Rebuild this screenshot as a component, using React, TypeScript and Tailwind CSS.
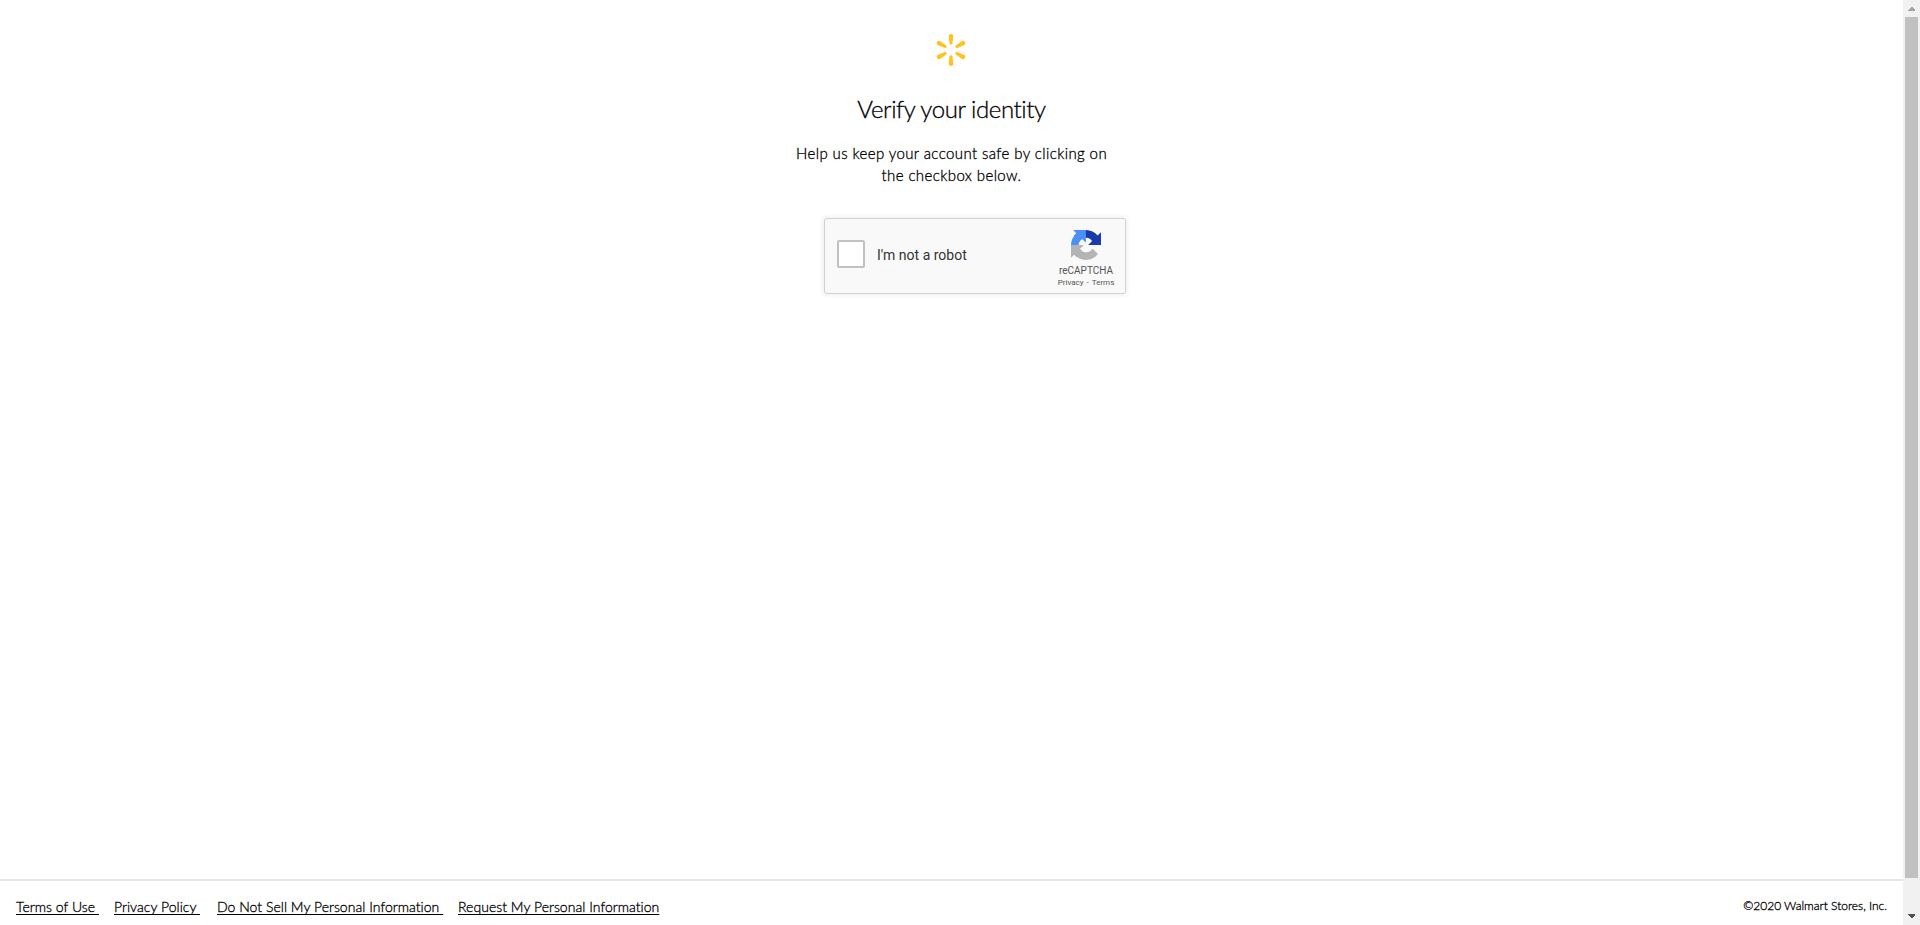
import React from 'react';

const rays = [0, 60, 120, 180, 240, 300];

function Spark() {
  return (
    <svg className="mr-px h-8 w-8" viewBox="-16 -16 32 32" fill="#ffc220" aria-hidden="true">
      {rays.map((a) => (
        <path
          key={a}
          transform={`rotate(${a})`}
          d="M0-16c-1.4 0-2.400.8-2.300 1.900l.8 7.700c.1.7.8 1.100 1.500 1.100s1.400-.4 1.500-1.100l.8-7.700C2.400-15.200 1.400-16 0-16z"
        />
      ))}
    </svg>
  );
}

function CaptchaLogo() {
  return (
    <svg className="h-[30px] w-[30px]" viewBox="0 0 64 64" aria-hidden="true">
      <path fill="#1c3aa9" d="M64 31.955l-.033-1.37V4.687l-7.16 7.16C50.948 4.674 42.033.093 32.05.093c-10.4 0-19.622 4.96-25.458 12.64l11.736 11.86a15.55 15.55 0 0 1 4.754-5.334c2.05-1.6 4.952-2.906 8.968-2.906.485 0 .86.057 1.135.163 4.976.393 9.288 3.14 11.828 7.124l-8.307 8.307L64 31.953" />
      <path fill="#4a90f6" d="M31.862.094l-1.37.033H4.594l7.16 7.16C4.58 13.147 0 22.06 0 32.046c0 10.4 4.96 19.622 12.64 25.458L24.5 45.768a15.55 15.55 0 0 1-5.334-4.754c-1.6-2.05-2.906-4.952-2.906-8.968 0-.485.057-.86.163-1.135.393-4.976 3.14-9.288 7.124-11.828l8.307 8.307L31.86.095" />
      <path fill="#b4b4b4" d="M.001 32.045l.033 1.37v25.898l7.16-7.16c5.86 7.173 14.774 11.754 24.76 11.754 10.4 0 19.622-4.96 25.458-12.64l-11.736-11.86a15.55 15.55 0 0 1-4.754 5.334c-2.05 1.6-4.952 2.906-8.968 2.906-.485 0-.86-.057-1.135-.163-4.976-.393-9.288-3.14-11.828-7.124l8.307-8.307c-10.522.04-22.4.066-27.295-.005" />
    </svg>
  );
}

function Captcha() {
  return (
    <div className="ml-[47px] flex h-[76px] w-[302px] rounded-[3px] border border-[#d3d3d3] bg-[#f9f9f9] pl-3 font-[Roboto,sans-serif] shadow-[0_0_4px_1px_rgba(0,0,0,0.08)]">
      <button aria-label="I'm not a robot" className="mt-[21px] h-7 w-7 rounded-[2px] border-2 border-[#c1c1c1] bg-white" />
      <span className="mt-[28px] ml-3 w-[170px] text-[14px] leading-[17px] whitespace-nowrap text-[#333]">I'm not a robot</span>
      <div className="flex w-[78px] flex-col items-center pt-[11px] text-[#555]">
        <CaptchaLogo />
        <span className="mt-[5px] text-[10px] leading-[12px]">reCAPTCHA</span>
        <span className="mt-px flex gap-[3px] text-[8px] leading-[10px]">
          <a href="#privacy">Privacy</a>
          <span>-</span>
          <a href="#terms">Terms</a>
        </span>
      </div>
    </div>
  );
}

const links = [
  { label: 'Terms of Use\u00a0', width: 'w-[82px]' },
  { label: 'Privacy Policy\u00a0', width: 'w-[87px]' },
  { label: 'Do Not Sell My Personal Information\u00a0', width: 'w-[225px]' },
  { label: 'Request My Personal Information', width: 'w-[201px]' },
];

function Footer() {
  return (
    <footer className="flex h-[46px] justify-between border-t-2 border-[#e6e6e6] px-4 pt-[17px] text-black">
      <nav className="flex gap-4 text-[14px] leading-[18px] tracking-[0.03px]">
        {links.map((l) => (
          <a key={l.label} href="#legal" className={`${l.width} whitespace-nowrap underline underline-offset-2`}>{l.label}</a>
        ))}
      </nav>
      <span className="text-[12px] leading-4 tracking-[-0.02px]">©2020 Walmart Stores, Inc.</span>
    </footer>
  );
}

function Scrollbar() {
  return (
    <div className="flex w-[17px] flex-col items-center bg-[#f1f1f1]">
      <svg className="h-[17px] w-[17px]" viewBox="0 0 17 17" fill="#a3a3a3" shapeRendering="crispEdges"><path d="M5 11V10L8 7H9L12 10V11z" /></svg>
      <div className="h-[861px] w-[13px] bg-[#c1c1c1]" />
      <svg className="mt-[30px] h-[17px] w-[17px]" viewBox="0 0 17 17" fill="#505050" shapeRendering="crispEdges"><path d="M5 6H12V7L9 10H8L5 7z" /></svg>
    </div>
  );
}

export default function App() {
  return (
    <div className="flex h-[925px] w-full overflow-hidden bg-white font-[Lato,sans-serif] font-light [font-variant-ligatures:none]">
      <div className="flex flex-1 flex-col [-webkit-text-stroke:0.3px_black]">
        <main className="flex flex-1 flex-col items-center pt-[34px] text-black">
          <Spark />
          <h1 className="mt-[27px] text-[24px] leading-8 tracking-[-0.42px]">Verify your identity</h1>
          <p className="mt-[17px] text-center text-[15px] leading-[22px] tracking-[0.4px]">
            Help us keep your account safe by clicking on<br />the checkbox below.
          </p>
          <div className="mt-[32px] font-normal [-webkit-text-stroke:0]"><Captcha /></div>
        </main>
        <Footer />
      </div>
      <Scrollbar />
    </div>
  );
}
